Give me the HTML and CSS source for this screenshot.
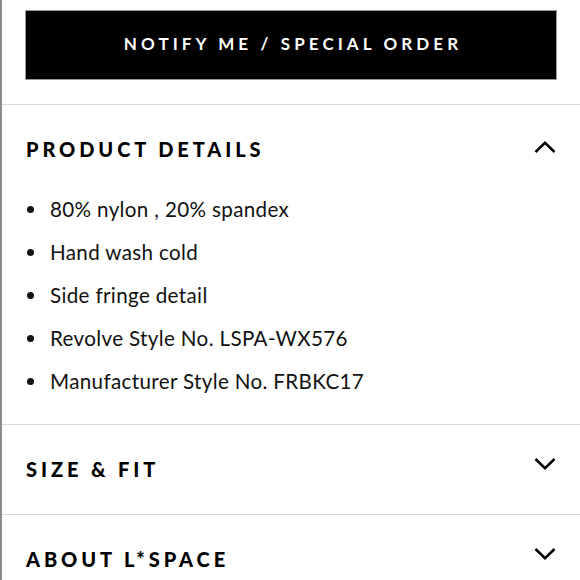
FILE: index.html
```html
<!DOCTYPE html>
<html>
<head>
<meta charset="utf-8">
<link rel="stylesheet" href="styles.css">
</head>
<body>
<div class="page">
  <div class="btn-wrap">
    <button class="notify">NOTIFY ME / SPECIAL ORDER</button>
  </div>
  <section class="acc open">
    <div class="acc-head first">
      <h2>PRODUCT DETAILS</h2>
      <svg class="chev" width="24" height="14" viewBox="0 0 24 14"><polyline points="2.5,12 12,2.8 21.5,12" fill="none" stroke="#000" stroke-width="2.5"/></svg>
    </div>
    <ul class="details">
      <li>80% nylon , 20% spandex</li>
      <li>Hand wash cold</li>
      <li>Side fringe detail</li>
      <li>Revolve Style No. LSPA-WX576</li>
      <li>Manufacturer Style No. FRBKC17</li>
    </ul>
  </section>
  <section class="acc">
    <div class="acc-head">
      <h2>SIZE &amp; FIT</h2>
      <svg class="chev down" width="24" height="14" viewBox="0 0 24 14"><polyline points="2.5,2 12,11.2 21.5,2" fill="none" stroke="#000" stroke-width="2.5"/></svg>
    </div>
  </section>
  <section class="acc">
    <div class="acc-head">
      <h2>ABOUT L*SPACE</h2>
      <svg class="chev down" width="24" height="14" viewBox="0 0 24 14"><polyline points="2.5,2 12,11.2 21.5,2" fill="none" stroke="#000" stroke-width="2.5"/></svg>
    </div>
  </section>
</div>
</body>
</html>
```

FILE: styles.css
```css
html, body {
  margin: 0;
  padding: 0;
  background: #fff;
}
.page {
  width: 578px;
  height: 580px;
  overflow: hidden;
  border-left: 2px solid #8a8a8a;
  font-family: "Lato", "Liberation Sans", sans-serif;
  color: #111;
}
.btn-wrap {
  padding: 10px 23px 24px 23px;
}
.notify {
  display: block;
  width: 100%;
  height: 70px;
  background: #000;
  color: #fff;
  border: 1px solid #9a9a9a;
  font-family: "Lato", "Liberation Sans", sans-serif;
  font-weight: 700;
  font-size: 17px;
  letter-spacing: 4.1px;
  padding: 0 0 3px 4px;
}
.acc {
  border-top: 1px solid #d8d8d8;
}
.acc-head {
  display: flex;
  align-items: center;
  justify-content: space-between;
  box-sizing: border-box;
  height: 89px;
  padding: 0 23px 1px 24px;
}
.acc-head.first {
  height: 83px;
  align-items: flex-start;
  padding-top: 32px;
}
.acc-head h2 {
  margin: 0;
  font-size: 20px;
  font-weight: 900;
  letter-spacing: 3.9px;
  line-height: 24px;
  color: #000;
}
.chev {
  display: block;
}
.acc-head.first .chev {
  margin-top: 3px;
}
.acc-head .chev.down {
  margin-top: -11px;
}
.details {
  list-style: none;
  margin: 0;
  padding: 0 0 21px 24px;
}
.details li {
  position: relative;
  height: 43px;
  line-height: 43px;
  padding-left: 24px;
  font-size: 20.6px;
  letter-spacing: 0.35px;
  color: #111;
}
.details li::before {
  content: "";
  position: absolute;
  left: 1px;
  top: 18px;
  width: 7px;
  height: 7px;
  border-radius: 50%;
  background: #111;
}
```
